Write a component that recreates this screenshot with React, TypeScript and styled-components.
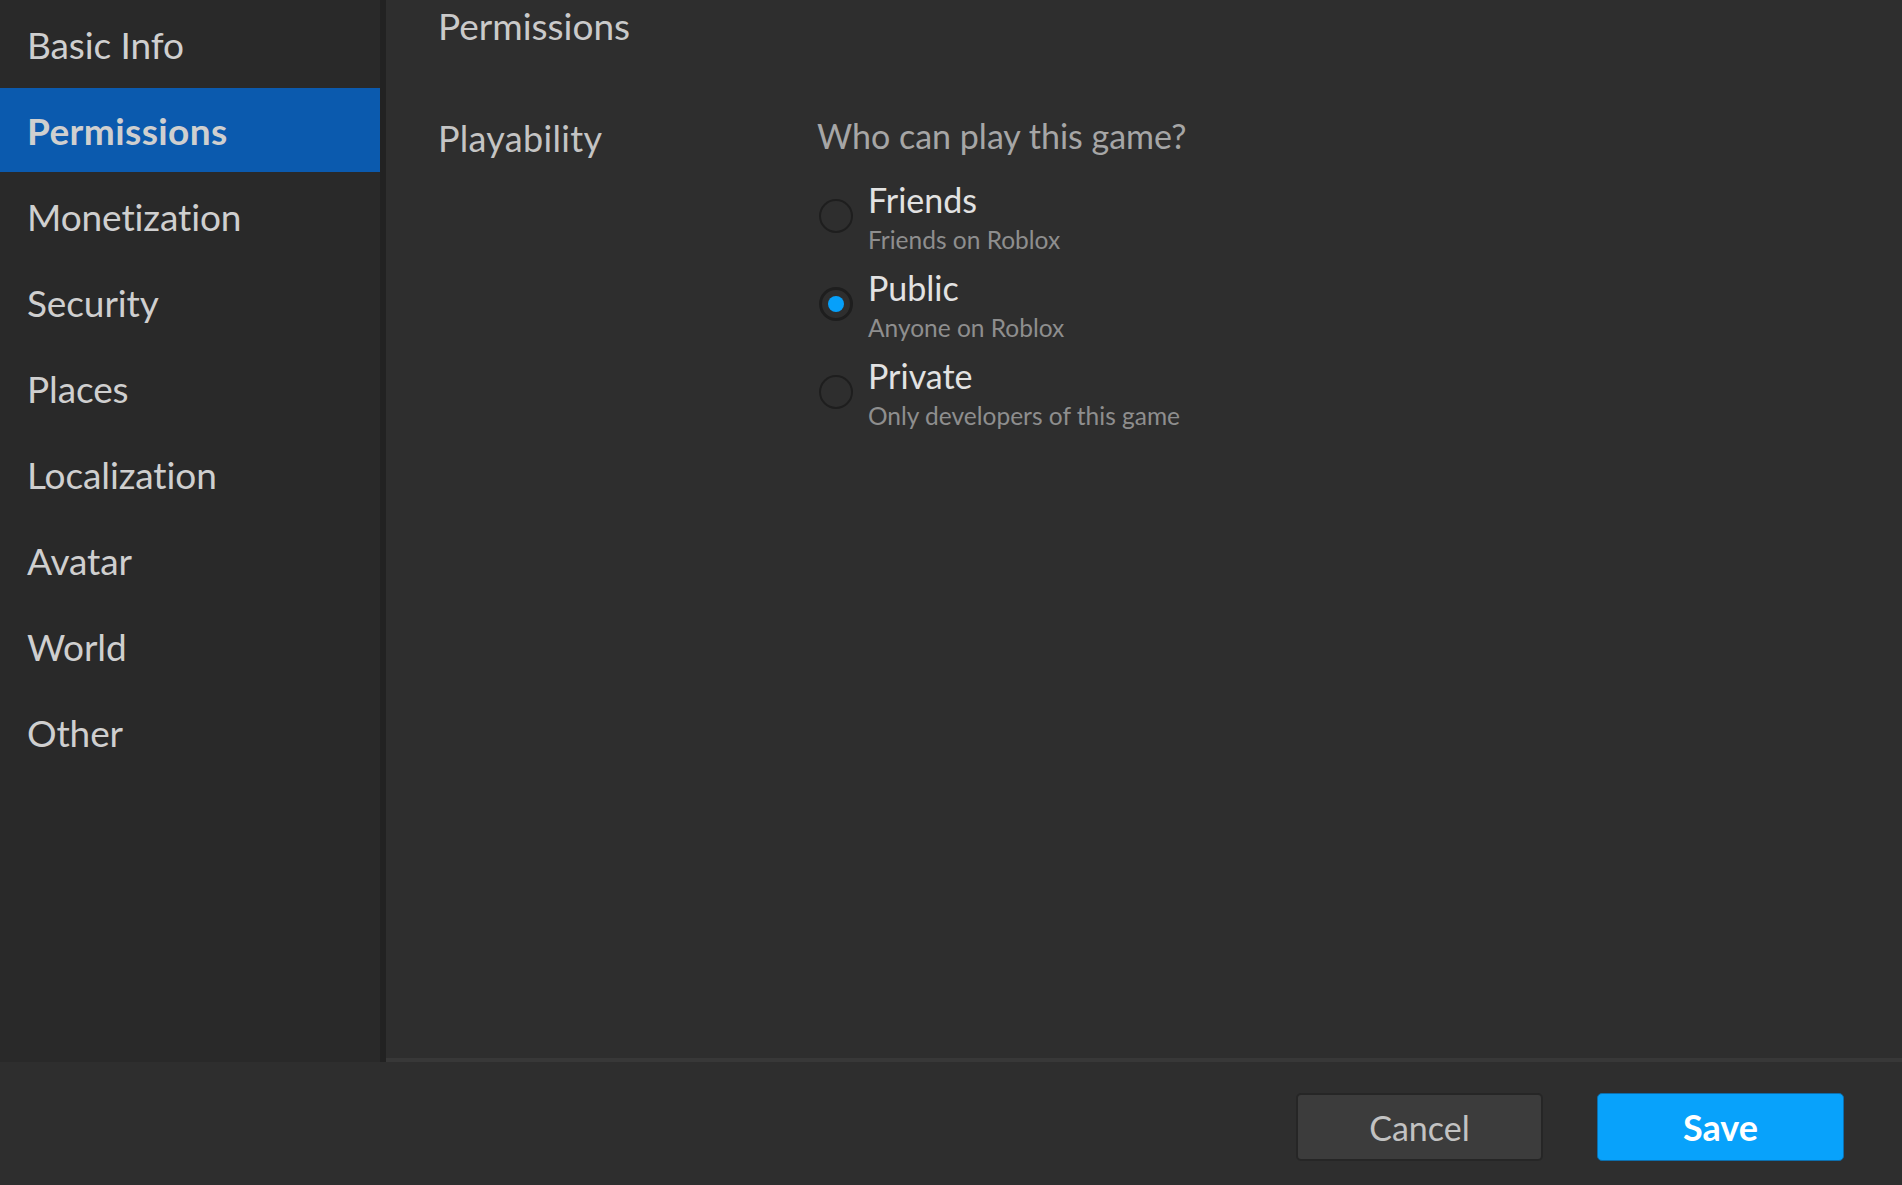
import React, { useState } from "react";
import styled, { createGlobalStyle } from "styled-components";

const Global = createGlobalStyle`
  html, body { margin: 0; padding: 0; background: #2e2e2e; }
  body { font-family: Lato, "Open Sans", sans-serif; }
  * { box-sizing: border-box; }
`;

const Shell = styled.div`
  width: 1902px;
  height: 1185px;
  display: flex;
  flex-direction: column;
  background: #2e2e2e;
  overflow: hidden;
`;

const Top = styled.div`
  display: flex;
  height: 1062px;
`;

const Sidebar = styled.nav`
  width: 386px;
  padding-top: 2px;
  background: #292929;
  border-right: 6px solid #222222;
  display: flex;
  flex-direction: column;
  gap: 2px;
`;

const NavItem = styled.div<{ $active?: boolean }>`
  height: 84px;
  display: flex;
  align-items: center;
  padding-left: 27px;
  font-size: 37px;
  color: #cfcfcf;
  font-weight: ${(p) => (p.$active ? 700 : 400)};
  letter-spacing: ${(p) => (p.$active ? "0.4px" : "-0.1px")};
  background: ${(p) => (p.$active ? "#0b5aae" : "transparent")};
`;

const Main = styled.main`
  flex: 1;
  padding-left: 52px;
  border-bottom: 4px solid #383838;
  display: flex;
  flex-direction: column;
`;

const PageTitle = styled.div`
  height: 52px;
  line-height: 52px;
  font-size: 37px;
  color: #cacaca;
`;

const Section = styled.section`
  margin-top: 62px;
  display: grid;
  grid-template-columns: 379px 1fr;
`;

const SectionLabel = styled.div`
  font-size: 36px;
  line-height: 48px;
  letter-spacing: 0.3px;
  color: #c4c4c4;
`;

const Content = styled.div`
  display: flex;
  flex-direction: column;
`;

const Question = styled.div`
  font-size: 34px;
  line-height: 44px;
  color: #a6a6a6;
  margin-bottom: 21px;
`;

const Options = styled.div`
  display: flex;
  flex-direction: column;
  gap: 11px;
`;

const Option = styled.label`
  display: flex;
  align-items: flex-start;
  gap: 15px;
  cursor: pointer;
`;

const Radio = styled.span<{ $checked?: boolean }>`
  width: 34px;
  height: 34px;
  margin-top: 20px;
  margin-left: 2px;
  border-radius: 50%;
  border: ${(p) => (p.$checked ? "3px solid #1e1e1e" : "2px solid #1e1e1e")};
  display: flex;
  align-items: center;
  justify-content: center;
  flex-shrink: 0;

  &::after {
    content: "";
    display: ${(p) => (p.$checked ? "block" : "none")};
    width: 16px;
    height: 16px;
    border-radius: 50%;
    background: #06a0fa;
  }
`;

const OptionText = styled.div`
  display: flex;
  flex-direction: column;
`;

const OptionTitle = styled.div`
  font-size: 34px;
  line-height: 42px;
  color: #e2e2e2;
`;

const OptionSub = styled.div`
  font-size: 24.5px;
  line-height: 32px;
  padding-top: 3px;
  color: #8e8e8e;
`;

const Footer = styled.footer`
  flex: 1;
  display: flex;
  justify-content: flex-end;
  align-items: flex-start;
  padding-top: 31px;
  padding-right: 58px;
  gap: 54px;
`;

const Button = styled.button<{ $primary?: boolean }>`
  width: 247px;
  height: 68px;
  border-radius: 5px;
  font-family: Lato, "Open Sans", sans-serif;
  font-size: ${(p) => (p.$primary ? "36px" : "34px")};
  font-weight: ${(p) => (p.$primary ? 700 : 400)};
  color: ${(p) => (p.$primary ? "#ffffff" : "#c2c2c2")};
  background: ${(p) => (p.$primary ? "#08a2fb" : "#3c3c3c")};
  border: ${(p) => (p.$primary ? "1px solid #0c6fae" : "2px solid #262626")};
  display: flex;
  align-items: center;
  justify-content: center;
  cursor: pointer;
`;

const navItems = [
  "Basic Info",
  "Permissions",
  "Monetization",
  "Security",
  "Places",
  "Localization",
  "Avatar",
  "World",
  "Other",
];

const options = [
  { id: "friends", title: "Friends", sub: "Friends on Roblox" },
  { id: "public", title: "Public", sub: "Anyone on Roblox" },
  { id: "private", title: "Private", sub: "Only developers of this game" },
];

export default function App() {
  const [selected, setSelected] = useState("public");
  return (
    <Shell>
      <Global />
      <Top>
        <Sidebar>
          {navItems.map((n) => (
            <NavItem key={n} $active={n === "Permissions"}>
              {n}
            </NavItem>
          ))}
        </Sidebar>
        <Main>
          <PageTitle>Permissions</PageTitle>
          <Section>
            <SectionLabel>Playability</SectionLabel>
            <Content>
              <Question>Who can play this game?</Question>
              <Options>
                {options.map((o) => (
                  <Option key={o.id} onClick={() => setSelected(o.id)}>
                    <Radio $checked={selected === o.id} />
                    <OptionText>
                      <OptionTitle>{o.title}</OptionTitle>
                      <OptionSub>{o.sub}</OptionSub>
                    </OptionText>
                  </Option>
                ))}
              </Options>
            </Content>
          </Section>
        </Main>
      </Top>
      <Footer>
        <Button>Cancel</Button>
        <Button $primary>Save</Button>
      </Footer>
    </Shell>
  );
}
